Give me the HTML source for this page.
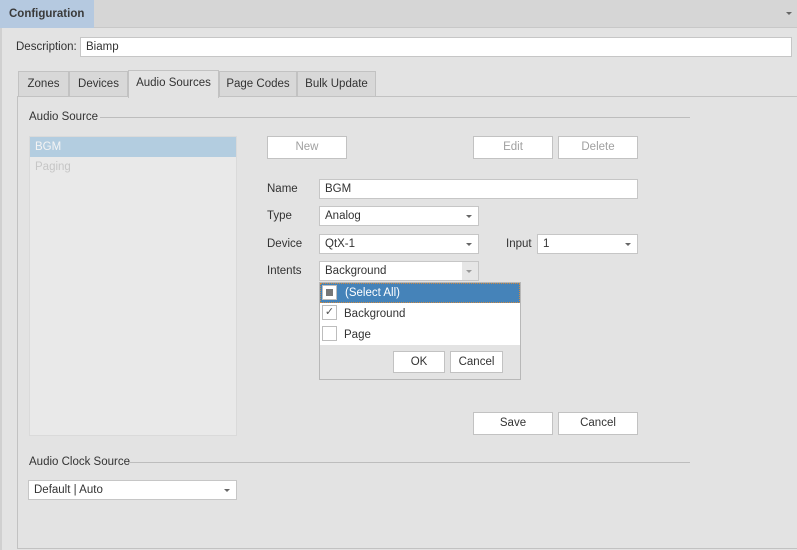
<!DOCTYPE html>
<html><head><style>
*{box-sizing:border-box;margin:0;padding:0}
body{width:797px;height:550px;background:#e3e3e3;font-family:"Liberation Sans",sans-serif;font-size:11.5px;color:#333;position:relative;overflow:hidden}
.a{position:absolute}
.box{position:absolute;background:#fff;border:1px solid #c6c6c6;padding:0 5px;line-height:19px;white-space:nowrap}
.btn{position:absolute;background:#fff;border:1px solid #c2c2c2;text-align:center;line-height:21px}
.arr{position:absolute;right:6px;top:8px;width:0;height:0;border-left:3px solid transparent;border-right:3px solid transparent;border-top:3px solid #666}
.tab{position:absolute;top:71px;height:26px;background:#d8d8d8;border:1px solid #c2c2c2;line-height:25px;text-align:center}
.cb{position:absolute;left:3px;width:15px;height:15px;background:#fff;border:1px solid #bdbdbd}
</style></head><body>
<div class="a" style="left:0;top:0;width:797px;height:28px;background:#d6d6d6;border-bottom:1px solid #c8c8c8"></div>
<div class="a" style="left:0;top:0;width:94px;height:28px;background:#b5c9e0;font-weight:bold;line-height:28px;padding-left:9px;color:#3a3a3a">Configuration</div>
<div class="a" style="left:786px;top:12px;border-left:3px solid transparent;border-right:3px solid transparent;border-top:3px solid #666"></div>
<div class="a" style="left:0;top:28px;width:2px;height:522px;background:#d0d0d0"></div>
<div class="a" style="left:16px;top:41px">Description:</div>
<div class="box" style="left:80px;top:37px;width:712px;height:20px;line-height:19px">Biamp</div>
<div class="a" style="left:17px;top:96px;width:790px;height:453px;border:1px solid #c2c2c2;background:#e3e3e3"></div>
<div class="tab" style="left:18px;width:51px">Zones</div>
<div class="tab" style="left:69px;width:59px">Devices</div>
<div class="tab" style="left:128px;width:91px;top:70px;height:28px;background:#e3e3e3;border-bottom:none">Audio Sources</div>
<div class="tab" style="left:219px;width:78px">Page Codes</div>
<div class="tab" style="left:297px;width:79px">Bulk Update</div>
<div class="a" style="left:29px;top:111px">Audio Source</div>
<div class="a" style="left:100px;top:117px;width:590px;height:1px;background:#bdbdbd"></div>
<div class="a" style="left:29px;top:136px;width:208px;height:300px;background:#e9e9e9;border:1px solid #dadada"></div>
<div class="a" style="left:30px;top:137px;width:206px;height:20px;background:#b3cde0;color:#f4f4f4;line-height:20px;padding-left:5px">BGM</div>
<div class="a" style="left:35px;top:161px;color:#c6c6c6">Paging</div>
<div class="btn" style="left:267px;top:136px;width:80px;height:23px;color:#a0a0a0">New</div>
<div class="btn" style="left:473px;top:136px;width:80px;height:23px;color:#a0a0a0">Edit</div>
<div class="btn" style="left:558px;top:136px;width:80px;height:23px;color:#a0a0a0">Delete</div>
<div class="a" style="left:267px;top:183px">Name</div>
<div class="box" style="left:319px;top:179px;width:319px;height:20px">BGM</div>
<div class="a" style="left:267px;top:210px">Type</div>
<div class="box" style="left:319px;top:206px;width:160px;height:20px">Analog<i class="arr"></i></div>
<div class="a" style="left:267px;top:238px">Device</div>
<div class="box" style="left:319px;top:234px;width:160px;height:20px">QtX-1<i class="arr"></i></div>
<div class="a" style="left:506px;top:238px">Input</div>
<div class="box" style="left:537px;top:234px;width:101px;height:20px">1<i class="arr"></i></div>
<div class="a" style="left:267px;top:265px">Intents</div>
<div class="box" style="left:319px;top:261px;width:160px;height:20px">Background<span class="a" style="right:0;top:0;width:16px;height:18px;background:#e6e6e6"></span><i class="arr" style="border-top-color:#999"></i></div>
<div class="a" style="left:319px;top:282px;width:202px;height:98px;background:#e3e3e3;border:1px solid #b8b8b8"></div>
<div class="a" style="left:320px;top:283px;width:200px;height:62px;background:#fff"></div>
<div class="a" style="left:320px;top:283px;width:200px;height:20px;background:#4583b9;border:1px dotted #d08a40;color:#fff;line-height:19px;padding-left:24px">(Select All)</div>
<div class="cb" style="left:322px;top:285px"><span class="a" style="left:3px;top:3px;width:7px;height:7px;background:#777"></span></div>
<div class="cb" style="left:322px;top:305px;color:#555;line-height:13px;text-align:center;font-size:11px">✓</div>
<div class="a" style="left:344px;top:308px">Background</div>
<div class="cb" style="left:322px;top:326px"></div>
<div class="a" style="left:344px;top:329px">Page</div>
<div class="btn" style="left:393px;top:351px;width:52px;height:22px">OK</div>
<div class="btn" style="left:450px;top:351px;width:53px;height:22px">Cancel</div>
<div class="btn" style="left:473px;top:412px;width:80px;height:23px">Save</div>
<div class="btn" style="left:558px;top:412px;width:80px;height:23px">Cancel</div>
<div class="a" style="left:29px;top:456px">Audio Clock Source</div>
<div class="a" style="left:128px;top:462px;width:562px;height:1px;background:#bdbdbd"></div>
<div class="box" style="left:28px;top:480px;width:209px;height:20px">Default | Auto<i class="arr"></i></div>
</body></html>
